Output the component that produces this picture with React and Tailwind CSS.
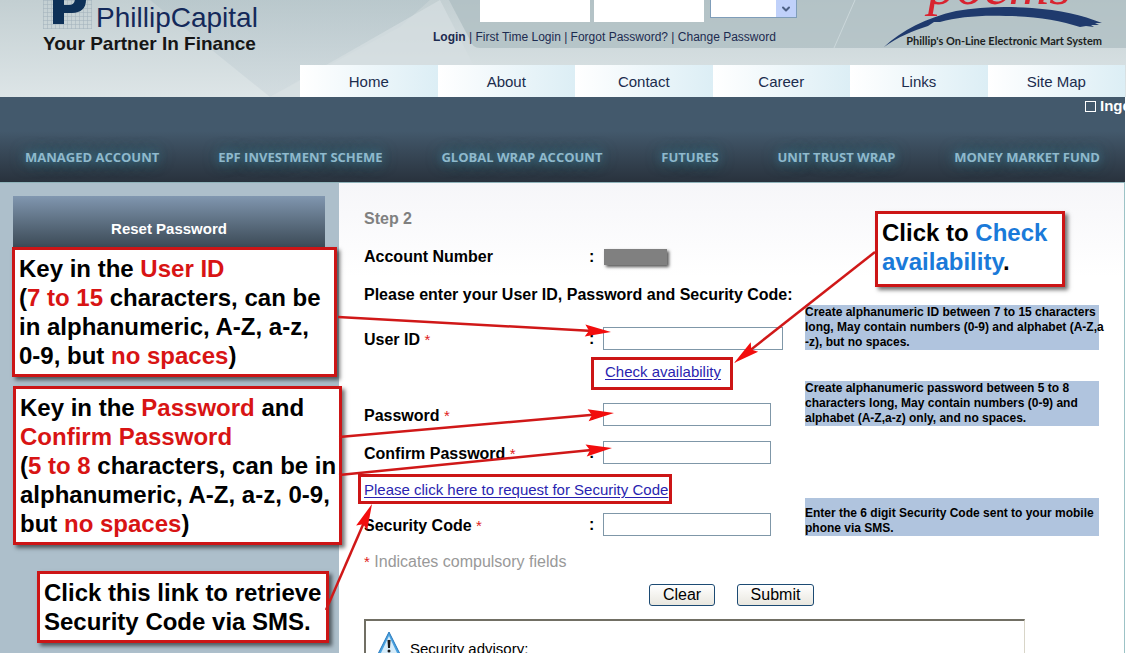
import React, { useState } from "react";
import { ChevronDown } from "lucide-react";

const TOP_LINKS = ["Home", "About", "Contact", "Career", "Links", "Site Map"];

const PRODUCTS = [
  "MANAGED ACCOUNT",
  "EPF INVESTMENT SCHEME",
  "GLOBAL WRAP ACCOUNT",
  "FUTURES",
  "UNIT TRUST WRAP",
  "MONEY MARKET FUND",
];

function HeaderBackdrop() {
  return (
    <svg
      className="absolute inset-0 w-full h-full"
      viewBox="0 0 1126 97"
      preserveAspectRatio="none"
      aria-hidden="true"
    >
      <defs>
        <linearGradient id="sky" x1="0" y1="0" x2="0.04" y2="1">
          <stop offset="0" stopColor="#c3cfd2" />
          <stop offset="1" stopColor="#dde5e7" />
        </linearGradient>
        <linearGradient id="fold" x1="0" y1="0" x2="0" y2="1">
          <stop offset="0" stopColor="#b3c3c8" />
          <stop offset="1" stopColor="#cdd7dc" />
        </linearGradient>
      </defs>
      <rect width="1126" height="97" fill="url(#sky)" />
      <path d="M150 0H430L400 27L270 97Z" fill="url(#fold)" opacity="0.6" />
      <path d="M440 0L270 97H490Z" fill="#d5dee1" opacity="0.7" />
      <path d="M449 0H1126V48H480Q472 48 469 38Z" fill="#adbdc2" opacity="0.75" />
      <path d="M855 0L834 48" stroke="#cbd7da" strokeWidth="1" />
    </svg>
  );
}

function PoemsLogo() {
  return (
    <div className="relative w-[218px] h-[50px] overflow-hidden">
      <svg width="218" height="50" viewBox="0 0 218 50" aria-hidden="true">
        <text
          x="44"
          y="4"
          fontSize="56"
          fontStyle="italic"
          fontFamily="Liberation Serif, serif"
          fill="#d8232f"
        >
          poems
        </text>
        <path
          d="M0 47C18 30 42 18 72 11C96 7 120 6 148 8C176 10 198 15 218 23L211 23L215 25L207 25L210 27L202 26L196 27C176 20 150 16 122 16C96 15 74 17 56 22L50 22L44 26C28 31 14 37 0 47Z"
          fill="#1f3a6d"
        />
      </svg>
      <div className="absolute right-0 bottom-0 text-[11px] leading-[18px] font-bold text-[#1b1f22] whitespace-nowrap font-['Lato',sans-serif]">
        Phillip's On-Line Electronic Mart System
      </div>
    </div>
  );
}

function Header() {
  return (
    <header className="relative">
      <HeaderBackdrop />
      <div className="relative flex h-[65px] overflow-hidden">
        <div className="w-[433px] pl-[43px] shrink-0">
          <div className="flex h-[31px]">
            <svg width="49" height="30" viewBox="0 0 49 30" aria-hidden="true">
              <defs>
                <pattern id="mesh" width="4" height="4" patternUnits="userSpaceOnUse">
                  <path d="M0 0H4M0 0V4" stroke="#9fb0ba" strokeWidth="1" />
                </pattern>
              </defs>
              <rect width="49" height="29" fill="url(#mesh)" />
              <path
                d="M10 -12H28C39 -12 43 -7 43 0C43 8 38 13 29 13H21V24H10ZM21 -2V5H26C30 5 32 3 32 -2Z"
                fill="#0e3158"
                fillRule="evenodd"
              />
            </svg>
            <span className="ml-1 pt-0.5 text-[28px] leading-8 text-[#14295a]">PhillipCapital</span>
          </div>
          <div className="text-[19px] leading-[26px] font-bold text-[#161616]">
            Your Partner In Finance
          </div>
        </div>

        <div className="text-[12px] text-[#1c2b50]">
          <div className="flex gap-1 pl-[47px] h-[22px]">
            <input aria-label="Login ID" className="w-[110px] h-[22px] bg-white px-1" />
            <input
              aria-label="Login password"
              type="password"
              className="w-[110px] h-[22px] bg-white px-1"
            />
            <div className="relative ml-0.5 h-[18px]">
              <select
                aria-label="Login service"
                className="appearance-none w-[87px] h-[18px] bg-white border border-t-0 border-[#7f9db9]"
              >
                <option></option>
              </select>
              <span className="absolute right-px top-0 w-5 h-[17px] bg-[#c0d1fa] flex items-center justify-center pointer-events-none">
                <ChevronDown size={12} strokeWidth={4} color="#4d6185" />
              </span>
            </div>
          </div>
          <div className="mt-1.5 leading-[18px] whitespace-nowrap">
            <a href="#login" className="font-bold">Login</a> |{" "}
            <a href="#first">First Time Login</a> |{" "}
            <a href="#forgot">Forgot Password?</a> |{" "}
            <a href="#change">Change Password</a>
          </div>
        </div>

        <div className="ml-auto pr-6">
          <PoemsLogo />
        </div>
      </div>

      <nav className="relative grid grid-cols-6 ml-[300px] mr-px">
        {TOP_LINKS.map((label) => (
          <a
            key={label}
            href="#top"
            className="h-8 pt-0.5 flex items-center justify-center text-[15px] text-[#1b2c4d] bg-linear-to-r from-white to-[#dceef5]"
          >
            {label}
          </a>
        ))}
      </nav>
    </header>
  );
}

function ProductBar() {
  return (
    <div className="mr-px h-[86px] overflow-hidden bg-linear-to-b from-[#43596c] from-40% to-[#29323d] border-b border-[#8fb3ba]">
      <div className="flex justify-end items-center gap-1 h-[18px] text-[15px] font-bold text-white">
        <span className="w-[11px] h-[11px] border border-white" />
        <span className="w-[25px] overflow-hidden whitespace-nowrap">Inge</span>
      </div>
      <nav className="flex justify-between px-[25px] mt-8">
        {PRODUCTS.map((name) => (
          <a
            key={name}
            href="#product"
            className="text-[13px] leading-5 font-bold text-[#8fb9cc] whitespace-nowrap font-['Open_Sans',sans-serif] [text-shadow:0_0_10px_#3f8299,0_0_16px_#35677e]"
          >
            {name}
          </a>
        ))}
      </nav>
    </div>
  );
}

function Field({ id, label, type = "text", wide, hint, value, onChange }) {
  return (
    <div className="grid grid-cols-[225px_14px_202px_minmax(0,1fr)] items-end">
      <label htmlFor={id} className="font-bold leading-5">
        {label} <span className="font-normal text-[15px] text-[#e02020]">*</span>
      </label>
      <span className="font-bold leading-[22px]">:</span>
      <input
        id={id}
        name={id}
        type={type}
        value={value}
        onChange={onChange}
        className={`h-[23px] px-1 bg-white border border-[#7f97a8] ${wide ? "w-[180px]" : "w-[168px]"}`}
      />
      {hint && (
        <p className="bg-[#b0c4de] text-[12px] leading-[15px] font-bold whitespace-nowrap">{hint}</p>
      )}
    </div>
  );
}

function ResetForm() {
  const [form, setForm] = useState({
    userId: "",
    password: "",
    confirmPassword: "",
    securityCode: "",
  });

  const handleChange = (e) => {
    const { name, value } = e.target;
    setForm((prev) => ({ ...prev, [name]: value }));
  };

  const buttonStyle =
    "h-[22px] leading-5 rounded-[3px] border border-[#1c4a73] bg-linear-to-b from-white to-[#e9e7df]";

  return (
    <form onSubmit={(e) => e.preventDefault()}>
      <h1 className="font-bold leading-5 text-[#808080]">Step 2</h1>

      <div className="mt-[18px] grid grid-cols-[225px_14px_1fr] items-center font-bold leading-5">
        <span>Account Number</span>
        <span>:</span>
        <span className="ml-px w-[63px] h-4 bg-[#808080] shadow-[2px_2px_3px_#555]" />
      </div>

      <p className="mt-[18px] font-bold leading-5">
        Please enter your User ID, Password and Security Code:
      </p>

      <Field
        id="userId"
        label="User ID"
        wide
        value={form.userId}
        onChange={handleChange}
        hint={
          <>
            Create alphanumeric ID between 7 to 15 characters
            <br />
            long, May contain numbers (0-9) and alphabet (A-Z,a
            <br />
            -z), but no spaces.
          </>
        }
      />
      <div className="h-[31px] pt-3 pl-[241px] text-[15px] leading-5">
        <a href="#check" className="text-[#2a1fb0] underline underline-offset-2">
          Check availability
        </a>
      </div>
      <Field
        id="password"
        label="Password"
        type="password"
        value={form.password}
        onChange={handleChange}
        hint={
          <>
            Create alphanumeric password between 5 to 8
            <br />
            characters long, May contain numbers (0-9) and
            <br />
            alphabet (A-Z,a-z) only, and no spaces.
          </>
        }
      />
      <div className="mt-[15px]">
        <Field
          id="confirmPassword"
          label="Confirm Password"
          type="password"
          value={form.confirmPassword}
          onChange={handleChange}
        />
      </div>
      <div className="h-[34px] pt-4 text-[15px] leading-5">
        <a href="#request" className="text-[#2a1fb0] underline underline-offset-2">
          Please click here to request for Security Code
        </a>
      </div>
      <Field
        id="securityCode"
        label="Security Code"
        value={form.securityCode}
        onChange={handleChange}
        hint={
          <span className="block pt-2">
            Enter the 6 digit Security Code sent to your mobile
            <br />
            phone via SMS.
          </span>
        }
      />

      <p className="mt-4 leading-5 text-[#999]">
        <span className="text-[15px] text-[#e02020]">*</span> Indicates compulsory fields
      </p>

      <div className="mt-3 pl-[285px] flex gap-[22px]">
        <button type="reset" className={`w-[66px] ${buttonStyle}`}>
          Clear
        </button>
        <button type="submit" className={`w-[77px] ${buttonStyle}`}>
          Submit
        </button>
      </div>
    </form>
  );
}

function Advisory() {
  return (
    <section className="mt-[13px] mr-[74px] h-24 flex gap-2 pt-2.5 pl-2.5 bg-white border-t-2 border-l-2 border-r border-t-[#716f64] border-l-[#716f64] border-r-[#d8d5c8]">
      <svg width="26" height="26" viewBox="0 0 26 26" aria-hidden="true">
        <path d="M13 1L25 25H1Z" fill="#4aa3e0" stroke="#2878bd" strokeLinejoin="round" />
        <path d="M13 5L22 24H4Z" fill="#d6ecfa" />
        <path d="M11.5 9H14.5L14 17H12Z" fill="#1a1a1a" />
        <circle cx="13" cy="20" r="1.5" fill="#1a1a1a" />
      </svg>
      <h2 className="mt-2 leading-5 text-[15px] text-black">Security advisory:</h2>
    </section>
  );
}

function Callout({ className, children }) {
  return (
    <div
      className={`absolute border-3 border-[#cc1516] bg-white px-1 py-1 text-2xl leading-[29px] font-bold text-black whitespace-nowrap shadow-[3px_3px_4px_rgba(0,0,0,0.55)] ${className}`}
    >
      {children}
    </div>
  );
}

// [x1, y1, x2, y2], head sits at the second point
const ARROWS = [
  [338, 317, 611, 332],
  [339, 437, 614, 413],
  [339, 475, 612, 448],
  [326, 610, 372, 504],
  [875, 252, 734, 363],
];

function Arrow({ points }) {
  const [x1, y1, x2, y2] = points;
  const angle = (Math.atan2(y2 - y1, x2 - x1) * 180) / Math.PI;
  const length = Math.hypot(x2 - x1, y2 - y1);
  return (
    <g transform={`translate(${x2} ${y2}) rotate(${angle})`}>
      <path d={`M${-length} 0H-18`} stroke="#d01818" strokeWidth="2.5" />
      <path d="M0 0L-26 -6L-22 0L-26 6Z" fill="#f20d0d" />
    </g>
  );
}

function Red({ children }) {
  return <span className="text-[#d81414]">{children}</span>;
}

function Annotations() {
  return (
    <div className="absolute inset-0 pointer-events-none">
      <Callout className="left-3 top-[247px] w-[325px]">
        Key in the <Red>User ID</Red>
        <br />(<Red>7 to 15</Red> characters, can be
        <br />
        in alphanumeric, A-Z, a-z,
        <br />
        0-9, but <Red>no spaces</Red>)
      </Callout>
      <Callout className="left-[13px] top-[386px] w-[329px]">
        Key in the <Red>Password</Red> and
        <br />
        <Red>Confirm Password</Red>
        <br />(<Red>5 to 8</Red> characters, can be in
        <br />
        alphanumeric, A-Z, a-z, 0-9,
        <br />
        but <Red>no spaces</Red>)
      </Callout>
      <Callout className="left-[37px] top-[571px] w-[292px]">
        Click this link to retrieve
        <br />
        Security Code via SMS.
      </Callout>
      <Callout className="left-[875px] top-[211px] w-[190px] h-[76px]">
        Click to <span className="text-[#1a7ad9]">Check</span>
        <br />
        <span className="text-[#1a7ad9]">availability</span>.
      </Callout>
      <svg className="absolute left-0 top-0" width="1126" height="653" fill="none" aria-hidden="true">
        <rect x="592.5" y="358.5" width="139" height="30" stroke="#cc1516" strokeWidth="3" />
        <rect x="359.5" y="475.5" width="311" height="27" stroke="#cc1516" strokeWidth="3" />
        {ARROWS.map((points) => (
          <Arrow key={points.join()} points={points} />
        ))}
      </svg>
    </div>
  );
}

export default function App() {
  return (
    <div className="relative h-screen overflow-hidden flex flex-col bg-white text-[16px] text-black font-['Liberation_Sans',Arial,sans-serif]">
      <Header />
      <ProductBar />
      <div className="flex flex-1 min-h-0">
        <aside className="w-[339px] shrink-0 px-[13px] pt-[13px] bg-[#adbfcb]">
          <h2 className="mr-px h-[56px] pt-[23px] text-center text-[15px] leading-5 font-bold text-white bg-linear-to-b from-[#8197b0] to-[#36444f]">
            Reset Password
          </h2>
        </aside>
        <main className="flex-1 min-w-0 mr-px pt-[26px] px-[25px] border-r border-[#9cc3c6] bg-linear-to-b from-[#f6f6f9] via-white via-20% to-white">
          <ResetForm />
          <Advisory />
        </main>
      </div>
      <Annotations />
    </div>
  );
}
